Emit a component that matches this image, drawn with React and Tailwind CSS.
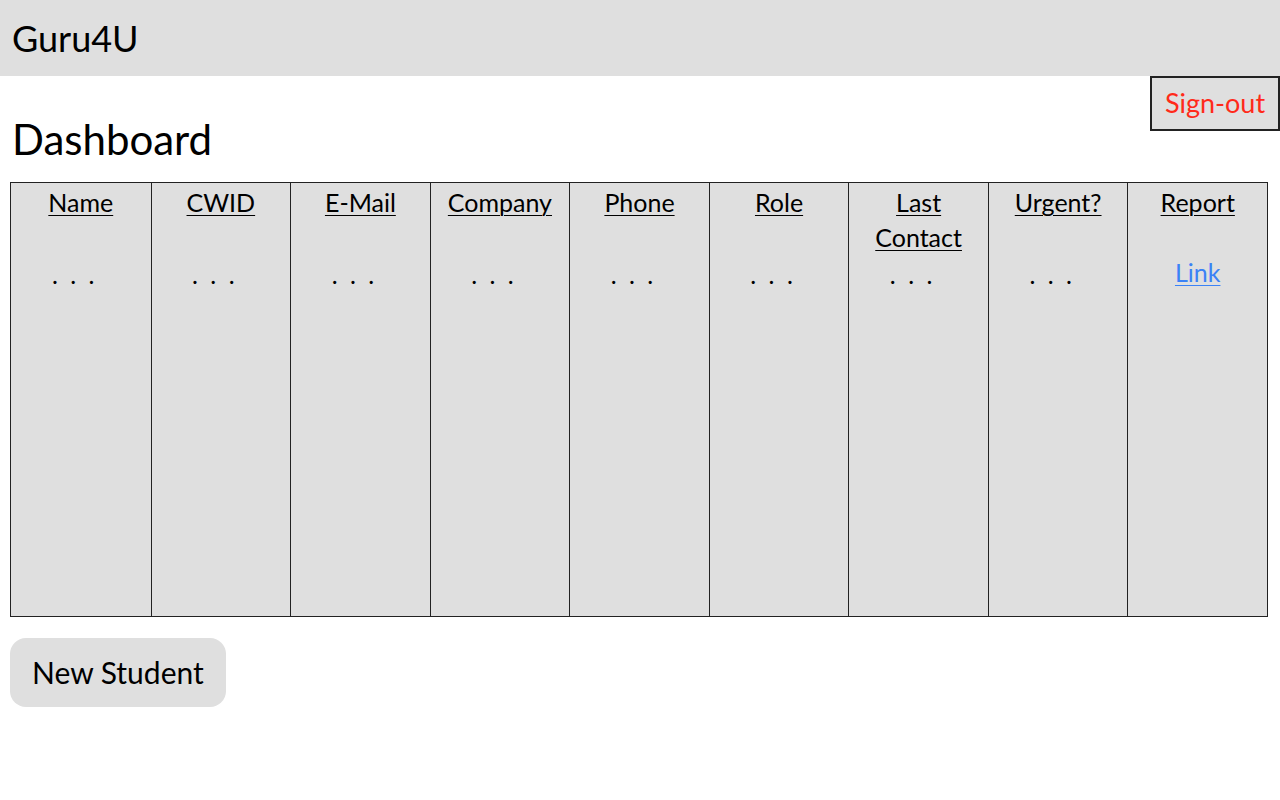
const columns = ["Name", "CWID", "E-Mail", "Company", "Phone", "Role", "Last Contact", "Urgent?", "Report"];

export default function App() {
  return (
    <div className="h-[800px] w-[1280px] bg-white text-black font-['Lato','Liberation_Sans',sans-serif]">
      {/* Top bar */}
      <header className="flex h-[76px] items-center bg-[#dfdfdf] px-3">
        <h1 className="text-[36px] leading-none">Guru4U</h1>
      </header>

      <div className="flex justify-end">
        <button className="h-[55px] w-[130px] border-2 border-[#222] bg-[#dfdfdf] text-[27px] text-[#ff2a1a]">
          Sign-out
        </button>
      </div>

      <h2 className="-mt-[18px] px-3 text-[42px] leading-[52px]">Dashboard</h2>

      {/* Student table */}
      <div className="mx-[10px] mt-[17px] grid h-[435px] w-[1258px] grid-cols-9 border border-[#222] bg-[#dfdfdf]">
        {columns.map((col, i) => (
          <div key={col} className={i > 0 ? "border-l border-[#222] pt-[2px] text-center" : "pt-[2px] text-center"}>
            <div className="h-[72px] text-[25px] leading-[35px] underline underline-offset-[3px] decoration-1">
              {col === "Last Contact" ? (
                <>
                  Last
                  <br />
                  Contact
                </>
              ) : (
                col
              )}
            </div>
            {col === "Report" ? (
              <a href="#" className="-mt-[2px] block text-[25px] leading-[35px] text-[#3b82f6] underline underline-offset-[3px] decoration-1">
                Link
              </a>
            ) : (
              <div className="pr-3 text-[25px] leading-[35px] tracking-[3px]">. . .</div>
            )}
          </div>
        ))}
      </div>

      <button className="mx-[10px] mt-[21px] h-[69px] rounded-2xl bg-[#dfdfdf] px-[22px] text-[30px]">
        New Student
      </button>
    </div>
  );
}
